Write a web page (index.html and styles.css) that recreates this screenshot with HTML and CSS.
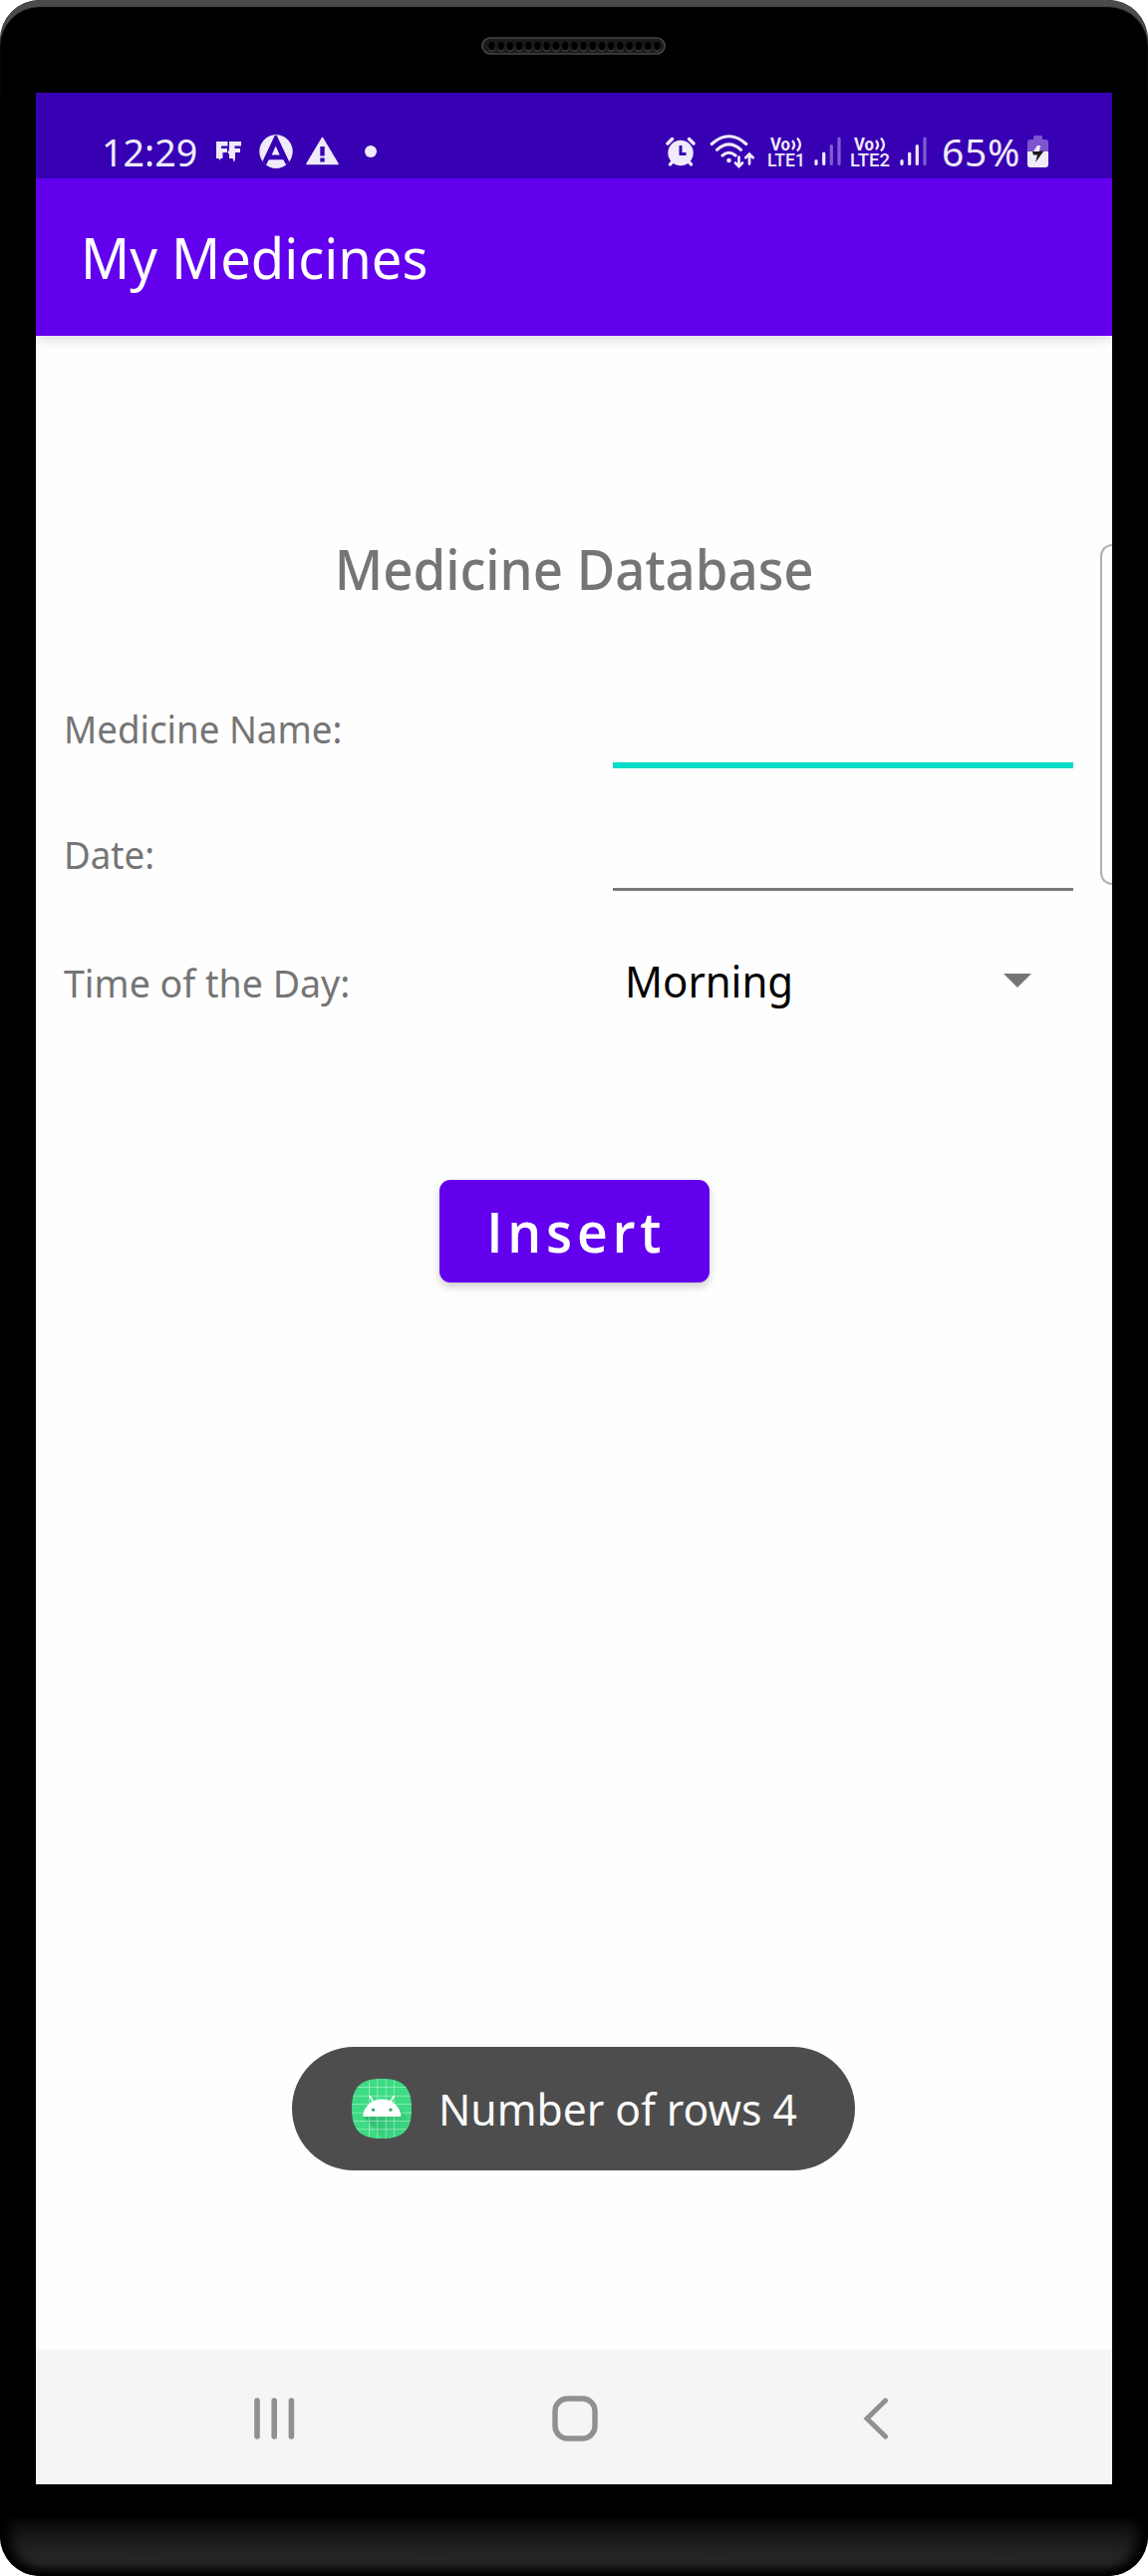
FILE: index.html
```html
<!DOCTYPE html>
<html lang="en">
<head>
<meta charset="utf-8">
<title>My Medicines</title>
<link rel="stylesheet" href="styles.css">
</head>
<body>
<div class="phone">
  <div class="bezel-top">
    <svg class="speaker" viewBox="0 0 185 18">
      <defs>
        <pattern id="holes" x="5.8" y="0" width="9.22" height="18" patternUnits="userSpaceOnUse">
          <ellipse cx="4.6" cy="10.2" rx="3.8" ry="4.6" fill="#484848"/>
          <ellipse cx="4.6" cy="9.2" rx="3.5" ry="4.2" fill="#000"/>
        </pattern>
      </defs>
      <rect x="1" y="1" width="183" height="16" rx="8" fill="#1a1a1a" stroke="#464646" stroke-width="1.6"/>
      <rect x="5.800" y="2" width="175.2" height="14" fill="url(#holes)"/>
    </svg>
  </div>

  <main class="screen">
    <div class="status-bar">
      <div class="status-group">
        <span class="clock">12:29</span>
        <svg class="icon-ff" width="27" height="24" viewBox="0 0 27 24"><path fill="#f0eafa" d="M1 2h11.500v4.500H6v2.500h6v4H7.500v6H5.500l-1 2-1-2H1zM14 2h12v4.500h-6.500v2.500h5.500v4h-5v6l-1 4-1.500-4H14v-4l-1.500-2 1.500-3z"/></svg>
        <svg class="icon-a" width="34" height="34" viewBox="0 0 34 34"><defs><clipPath id="disc"><circle cx="17" cy="17" r="16.7"/></clipPath></defs><g clip-path="url(#disc)"><rect width="34" height="34" fill="#f0eafa"/><path fill="#3700b3" d="M15.700 1h2.100l13.700 29h-5.200l-2.300-4.500H10.400l-2.300 4.500H2z"/><path fill="#f0eafa" d="M16.700 11.500l4 9h-8zM9.500 25.500h15l2.800 5.500-4 4H11l-4-4z"/></g></svg>
        <svg class="icon-warn" width="33" height="29" viewBox="0 0 33 29"><path fill="#f0eafa" stroke="#f0eafa" stroke-width="1.500" stroke-linejoin="round" d="M16.500 1.500L32 27.500H1z"/><path fill="#3700b3" d="M14.300 10h4.400v9.500h-4.400zM14.300 21.500h4.400v4h-4.400z"/></svg>
        <span class="dot"></span>
      </div>
      <div class="status-group">
        <svg class="icon-alarm" width="30" height="30" viewBox="0 0 30 30"><circle cx="15" cy="16.500" r="12.700" fill="#f0eafa"/><path d="M2 7l4.500-4.500M28 7l-4.500-4.500M7 25l-2.500 3M23 25l2.500 3" stroke="#f0eafa" stroke-width="3.400" stroke-linecap="round"/><path d="M15 9v8.500h5.500" fill="none" stroke="#3700b3" stroke-width="3"/></svg>
        <svg class="icon-wifi" width="46" height="34" viewBox="0 0 46 34"><g fill="none" stroke="#f0eafa" stroke-width="3.100" stroke-linecap="round"><path d="M2.200 9.500Q19.500-6 36.800 9.500M7.500 15.300Q19.500 4.500 31.500 15.300M13 21Q19.500 15.500 26 21"/><path d="M29.500 22.500v9M26 28.500l3.500 3.500 3.500-3.500M40 29.500v-9M36.300 23.300l3.700-3.700 3.700 3.700" stroke-width="2.700"/></g><circle cx="19.500" cy="26" r="2.300" fill="#f0eafa"/></svg>
        <svg class="icon-lte" width="43" height="42" viewBox="-1 -5 43 42"><g fill="#f0eafa" font-family="Roboto, sans-serif" font-weight="700"><text x="3" y="14.600" font-size="17.500" textLength="20" lengthAdjust="spacingAndGlyphs">Vo</text><text x="0" y="31.300" font-size="18.500" font-weight="500" textLength="38" lengthAdjust="spacingAndGlyphs">LTE1</text></g><path d="M25 5q4 4.500 0 9M30 2.500q6 6.500 0 13" fill="none" stroke="#f0eafa" stroke-width="2.300"/></svg>
        <svg class="icon-signal" width="28" height="30" viewBox="0 0 28 30"><g stroke="#f0eafa" stroke-width="3.200" stroke-linecap="round"><path d="M2 24.500v3M9.700 17v10.500"/><path opacity=".4" d="M17.300 9.500v18M25 2v25.500"/></g></svg>
        <svg class="icon-lte second" width="45" height="42" viewBox="-1 -5 45 42"><g fill="#f0eafa" font-family="Roboto, sans-serif" font-weight="700"><text x="4" y="14.600" font-size="17.500" textLength="20" lengthAdjust="spacingAndGlyphs">Vo</text><text x="0" y="31.300" font-size="18.500" font-weight="500" textLength="40" lengthAdjust="spacingAndGlyphs">LTE2</text></g><path d="M26 5q4 4.500 0 9M31 2.500q6 6.500 0 13" fill="none" stroke="#f0eafa" stroke-width="2.300"/></svg>
        <svg class="icon-signal" width="28" height="30" viewBox="0 0 28 30"><g stroke="#f0eafa" stroke-width="3.200" stroke-linecap="round"><path d="M2 24.500v3M9.700 17v10.500M17.300 9.500v18"/><path opacity=".4" d="M25 2v25.500"/></g></svg>
        <span class="percent">65%</span>
        <svg class="icon-battery" width="21" height="32" viewBox="0 0 21 32"><path fill="#7d55cf" d="M6 1.500Q6 0 7.500 0h6Q15 0 15 1.500V4h3q3 0 3 3v9H0V7q0-3 3-3h3z"/><path fill="#f0eafa" d="M0 16h21v13q0 3-3 3H3q-3 0-3-3z"/><path fill="#f0eafa" d="M10 10h3l-1 6H6z"/><path fill="#1a1a1a" d="M5 16h6l1.500-.5h4L8 27l2-7.500H6z"/></svg>
      </div>
    </div>

    <header class="app-bar"><h1 class="app-title">My Medicines</h1></header>

    <section class="content">
      <h2 class="heading">Medicine Database</h2>
      <div class="row row-name">
        <span class="label">Medicine Name:</span>
        <div class="field active"></div>
      </div>
      <div class="row row-date">
        <span class="label">Date:</span>
        <div class="field"></div>
      </div>
      <div class="row row-time">
        <span class="label label-time">Time of the Day:</span>
        <div class="spinner">
          <span class="value">Morning</span>
          <svg width="28" height="14" viewBox="0 0 28 14"><path fill="#757575" d="M0 0h28L14 14z"/></svg>
        </div>
      </div>
      <button class="insert"><span class="insert-text">Insert</span></button>
      <div class="edge-handle"></div>
      <div class="toast">
        <svg width="60" height="60" viewBox="0 0 60 60">
          <defs>
            <clipPath id="squircle"><path d="M30 0C50 0 60 7 60 30S50 60 30 60 0 53 0 30 10 0 30 0z"/></clipPath>
            <linearGradient id="shade" x1="0" y1="0" x2="1" y2="1"><stop offset="0" stop-color="#2aa566"/><stop offset="1" stop-color="#3ddc84" stop-opacity=".3"/></linearGradient>
          </defs>
          <g clip-path="url(#squircle)">
            <rect width="60" height="60" fill="#3ddc84"/>
            <path fill="url(#shade)" d="M11.500 38L32 61h28V43L46 28z"/>
            <path stroke="#fff" stroke-opacity=".38" stroke-width="1" d="M17.500 0v60M25.700 0v60M34.300 0v60M42.500 0v60M0 8.500h60M0 17.300h60M0 25.500h60M0 34.300h60M0 42.500h60M0 50.700h60"/>
            <path fill="#fff" d="M11.300 38a19 17.500 0 0 1 38 0z"/>
            <path stroke="#fff" stroke-width="1.500" stroke-linecap="round" d="M18.200 17.500l3.500 6M42.200 17.500l-3.500 6"/>
            <circle cx="21.500" cy="31.200" r="1.600" fill="#2fa76a"/><circle cx="39" cy="31.200" r="1.600" fill="#2fa76a"/>
          </g>
        </svg>
        <span class="toast-text">Number of rows 4</span>
      </div>
    </section>

    <nav class="nav-bar">
      <svg width="41" height="42" viewBox="0 0 41 42"><path d="M3 3v36M20.200 3v36M37.400 3v36" stroke="#909090" stroke-width="5.600" stroke-linecap="round"/></svg>
      <svg width="46" height="46" viewBox="0 0 46 46"><rect x="3" y="3" width="40" height="40" rx="12.500" fill="none" stroke="#909090" stroke-width="5.400"/></svg>
      <svg width="26" height="42" viewBox="0 0 26 42"><path d="M22.500 3L4 21l18.500 18" fill="none" stroke="#909090" stroke-width="5" stroke-linecap="round"/></svg>
    </nav>
  </main>

  <div class="chin"></div>
</div>
</body>
</html>
```
FILE: styles.css
```css
* { box-sizing: border-box; }

body {
  margin: 0;
  background: #fff;
  font-family: "Noto Sans", "Open Sans", sans-serif;
}

svg { display: block; flex: none; }

.phone {
  width: 1152px;
  height: 2585px;
  display: flex;
  flex-direction: column;
  background: #000;
  border-radius: 40px;
  overflow: hidden;
}

.bezel-top {
  height: 93px;
  flex: none;
  display: flex;
  justify-content: center;
  padding: 37px 1px 0 0;
  border-radius: 40px 40px 0 0;
  box-shadow: inset 0 7px 1px #4b4b4b;
}

.speaker { width: 185px; height: 18px; }

.screen {
  height: 2400px;
  flex: none;
  margin: 0 36px 34px;
  display: flex;
  flex-direction: column;
  background: #fefefe;
}

.status-bar {
  height: 86px;
  display: flex;
  justify-content: space-between;
  padding: 31px 64px 0 66px;
  background: #3700b3;
  color: #f0eafa;
}

.status-group { height: 55px; display: flex; align-items: center; }

/* The interface typeface is slightly narrow, so its text is condensed. */
.clock, .app-title, .label, .value, .toast-text { transform-origin: 0 50%; }

.clock {
  width: 103px;
  font-size: 39px;
  line-height: 55px;
  transform: scaleX(.965);
}

.icon-ff { margin-left: 11px; }
.icon-a { margin-left: 17px; }
.icon-warn { margin-left: 13px; }

.dot {
  width: 12px;
  height: 12px;
  margin-left: 26px;
  border-radius: 50%;
  background: #f0eafa;
}

.icon-wifi { margin-left: 14px; }
.icon-lte { margin-left: 11px; }
.icon-lte.second { margin-left: 7px; }
.icon-signal { margin-left: 5px; }
.second + .icon-signal { margin-left: 6px; }

.percent {
  width: 82px;
  margin-left: 14px;
  font-size: 39px;
  line-height: 55px;
  letter-spacing: .7px;
}

.icon-battery { margin-left: 4px; }

.app-bar {
  height: 158px;
  display: flex;
  align-items: center;
  padding-left: 45px;
  background: #6200ee;
  box-shadow: 0 3px 12px rgba(0, 0, 0, .15);
  clip-path: inset(0 0 -14px 0);
  z-index: 1;
}

.app-title {
  margin: 0;
  color: #fff;
  font-size: 56px;
  font-weight: 400;
  line-height: 80px;
  transform: scaleX(.969);
}

.content {
  position: relative;
  height: 2021px;
  display: flex;
  flex-direction: column;
  align-items: center;
  padding-top: 193px;
}

.heading {
  margin: 0;
  color: #757575;
  font-size: 56px;
  font-weight: 500;
  line-height: 80px;
  transform: scaleX(.942);
}

.row {
  width: 100%;
  display: flex;
  align-items: center;
  justify-content: space-between;
  padding: 0 39px 0 28px;
}

.row-name { height: 80px; margin-top: 81px; }
.row-date { height: 74px; margin-top: 49px; }
.row-time { height: 80px; margin-top: 50px; }

.label {
  color: #757575;
  font-size: 38.500px;
  line-height: 56px;
  transform: scaleX(.953);
}

.label-time { padding-top: 4px; transform: scaleX(.975); }

.field { width: 462px; height: 100%; border-bottom: 3px solid #7a7a7a; }
.field.active { border-bottom: 6px solid #03dcc8; }

.spinner {
  width: 462px;
  display: flex;
  align-items: center;
  justify-content: space-between;
  padding: 0 42px 0 12px;
}

.value {
  color: #000;
  font-size: 44.500px;
  line-height: 64px;
  transform: scaleX(.942);
}

.insert {
  width: 271px;
  height: 103px;
  margin-top: 160px;
  padding: 0 0 0 5px;
  border: 0;
  border-radius: 11px;
  background: #6200ee;
  box-shadow: 0 4px 8px rgba(0, 0, 0, .2);
  color: #fff;
  font-family: "Open Sans", "Noto Sans", sans-serif;
  font-size: 56px;
  font-weight: 600;
  line-height: 103px;
  letter-spacing: 5px;
}

.insert-text { display: inline-block; transform: scaleX(.955); }

.edge-handle {
  position: absolute;
  top: 209px;
  right: 0;
  width: 12px;
  height: 342px;
  border: 2px solid #b0b0b0;
  border-right: 0;
  border-radius: 12px 0 0 12px;
}

.toast {
  position: absolute;
  left: 257px;
  top: 1717px;
  width: 565px;
  height: 124px;
  display: flex;
  align-items: center;
  gap: 27px;
  padding-left: 60px;
  border-radius: 62px;
  background: #4d4d4d;
  color: #fafafa;
}

.toast-text {
  font-size: 44.500px;
  line-height: 64px;
  white-space: nowrap;
  transform: scaleX(.957);
}

.nav-bar {
  height: 135px;
  display: grid;
  grid-template-columns: repeat(3, 302px);
  align-items: center;
  justify-items: center;
  padding: 3px 0 0 88px;
  background: #f5f5f5;
}

.chin {
  height: 58px;
  flex: none;
  border-radius: 0 0 40px 40px;
  background: linear-gradient(#0a0a0a, #252525 65%, #252525 78%, #181818 93%, #000);
  box-shadow: inset 10px -2px 12px #000, inset -10px -2px 12px #000;
}
```
